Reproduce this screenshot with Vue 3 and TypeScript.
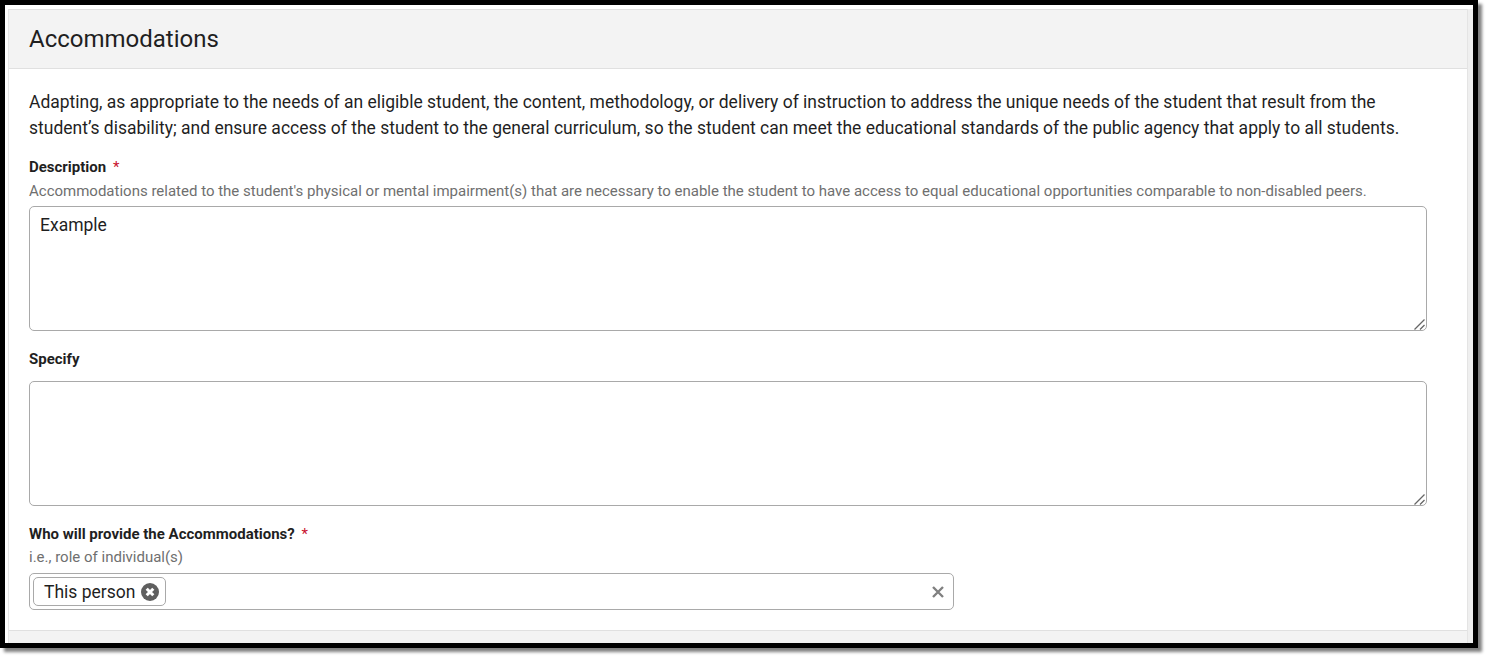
<script setup lang="ts">
const intro =
  'Adapting, as appropriate to the needs of an eligible student, the content, methodology, or delivery of instruction to address the unique needs of the student that result from the student’s disability; and ensure access of the student to the general curriculum, so the student can meet the educational standards of the public agency that apply to all students.'
const hint =
  "Accommodations related to the student's physical or mental impairment(s) that are necessary to enable the student to have access to equal educational opportunities comparable to non-disabled peers."
</script>

<template>
  <div class="frame">
    <div class="inner">
      <section class="card">
        <header class="card-head">
          <h1>Accommodations</h1>
        </header>
        <div class="card-body">
          <p class="intro">{{ intro }}</p>

          <label class="label desc-label">Description <span class="req">*</span></label>
          <p class="hint">{{ hint }}</p>
          <div class="area-wrap">
            <textarea class="area" readonly>Example</textarea>
            <svg class="grip" width="11" height="11" viewBox="0 0 11 11">
              <path d="M0.5 10.5l10-10M6 10.5l4.500-4.500" stroke="#666" stroke-width="1.3" fill="none" />
            </svg>
          </div>

          <label class="label specify-label">Specify</label>
          <div class="area-wrap">
            <textarea class="area" readonly></textarea>
            <svg class="grip" width="11" height="11" viewBox="0 0 11 11">
              <path d="M0.5 10.5l10-10M6 10.5l4.500-4.500" stroke="#666" stroke-width="1.3" fill="none" />
            </svg>
          </div>

          <label class="label who-label">Who will provide the Accommodations? <span class="req">*</span></label>
          <p class="hint who-hint">i.e., role of individual(s)</p>
          <div class="select">
            <span class="tag">
              This person
              <svg class="tag-x" width="18" height="18" viewBox="0 0 18 18">
                <circle cx="9" cy="9" r="9" fill="#5f5f5f" />
                <path d="M5.7 5.700l6.600 6.600M12.300 5.700l-6.600 6.600" stroke="#fff" stroke-width="3" />
              </svg>
            </span>
            <svg class="clear" width="14" height="14" viewBox="0 0 14 14">
              <path d="M2 2l10 10M12 2L2 12" stroke="#808080" stroke-width="2.4" />
            </svg>
          </div>
        </div>
        <footer class="card-foot"></footer>
      </section>
      <div class="strip"></div>
    </div>
  </div>
</template>

<style>
html,
body {
  margin: 0;
  height: 658px;
  background: #fff;
  overflow: hidden;
}
</style>

<style scoped>
.frame {
  box-sizing: border-box;
  width: 1478px;
  height: 648px;
  border: 5px solid #000;
  box-shadow: 4px 4px 3px #808080;
  font-family: Roboto, "Liberation Sans", sans-serif;
  color: #1f1f1f;
}

.inner {
  display: flex;
  height: 100%;
  padding: 4px 0 0 3px;
  box-sizing: border-box;
  background: #fff;
}

.card {
  flex: 1;
  min-width: 0;
  display: flex;
  flex-direction: column;
  border-left: 1px solid #e6e6e6;
  border-top: 1px solid #e0e0e0;
}

.strip {
  width: 6px;
  background: #efefef;
  border-left: 1px solid #e4e4e4;
  box-sizing: border-box;
}

.card-head {
  height: 58px;
  flex: none;
  display: flex;
  align-items: center;
  padding-left: 20px;
  background: #f3f3f3;
  border-bottom: 1px solid #e0e0e0;
}

.card-head h1 {
  margin: 0;
  font-size: 24px;
  font-weight: 400;
  line-height: 56px;
}

.card-body {
  flex: 1;
  min-height: 0;
  padding: 20px 20px 0;
}

.intro {
  margin: 0;
  font-size: 17.49px;
  line-height: 26px;
}

.label {
  display: block;
  font-size: 15px;
  font-weight: 700;
  line-height: 18px;
}

.desc-label {
  margin-top: 17px;
}

.specify-label {
  margin-top: 19px;
  margin-bottom: 13px;
}

.who-label {
  margin-top: 19px;
}

.req {
  color: #c8102e;
  margin-left: 3px;
  font-weight: 400;
}

.hint {
  margin: 7px 0;
  font-size: 15px;
  line-height: 16px;
  color: #6f6f6f;
}

.who-hint {
  margin: 6px 0 8px;
}

.area-wrap {
  position: relative;
  width: 1398px;
  height: 125px;
}

.area {
  display: block;
  box-sizing: border-box;
  width: 100%;
  height: 100%;
  padding: 6px 10px;
  border: 1px solid #a9a9a9;
  border-radius: 5px;
  font: 17.5px/24px Roboto, "Liberation Sans", sans-serif;
  color: #1f1f1f;
  outline: none;
  resize: none;
  background: #fff;
}

.grip {
  position: absolute;
  right: 2px;
  bottom: 1px;
}

.select {
  box-sizing: border-box;
  width: 925px;
  height: 37px;
  display: flex;
  align-items: center;
  justify-content: space-between;
  padding: 0 8px 0 3px;
  border: 1px solid #a9a9a9;
  border-radius: 5px;
}

.tag {
  box-sizing: border-box;
  display: flex;
  align-items: center;
  gap: 6px;
  height: 29px;
  padding: 0 6px 0 10px;
  border: 1px solid #a9a9a9;
  border-radius: 5px;
  font-size: 17.5px;
}

.card-foot {
  box-sizing: border-box;
  height: 13px;
  flex: none;
  background: #f3f3f3;
  border-top: 1px solid #e0e0e0;
}
</style>
